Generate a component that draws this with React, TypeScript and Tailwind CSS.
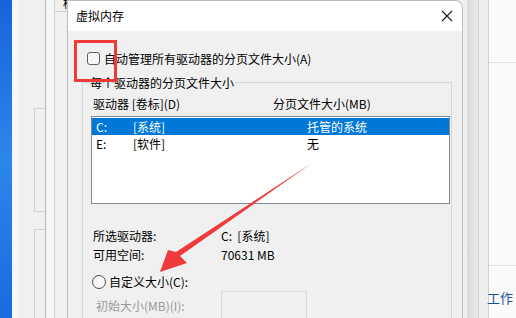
import React from "react";

const font = { fontFamily: '"Noto Sans CJK SC", "Noto Sans", sans-serif' };

function BackWindow() {
  return (
    <div className="flex h-full w-[55px] shrink-0">
      <div className="h-full w-[6px] bg-[#f7f7f7]" />
      <div className="flex h-full w-[16px] flex-col bg-[#f0f0f0]" />
      <div className="flex h-full w-[11px] flex-col bg-[#f0f0f0]">
        <div className="mt-[108px] h-[104px] border-l border-t border-b border-[#d0d0d0]" />
        <div className="mt-[17px] flex-1 border-l border-t border-[#d0d0d0]" />
      </div>
      <div className="h-full w-px bg-[#b9b9b9]" />
      <div className="h-full w-[8px] bg-[#f5f5f5]" />
      <div className="flex h-full w-[13px] flex-col bg-[#f0f0f0]">
        <div className="h-[12px] overflow-hidden border-b border-l border-[#d0d0d0] pl-[8px] text-[11px] leading-[6px] text-black">标</div>
        <div className="flex-1 border-l border-[#d0d0d0]" />
      </div>
    </div>
  );
}

function Dialog() {
  return (
    <div className="flex h-full w-[396px] shrink-0 flex-col overflow-hidden rounded-tr-[8px] border-x border-t border-[#bdbdbd] bg-[#f0f0f0] text-[12px] text-black">
      <div className="flex h-[30px] shrink-0 items-center justify-between bg-white pl-[8px] pr-[8px]">
        <span>虚拟内存</span>
        <svg width="12" height="12" viewBox="0 0 12 12" className="mr-[1px]">
          <path d="M1 1 L11 11 M11 1 L1 11" stroke="#1a1a1a" strokeWidth="1.1" fill="none" />
        </svg>
      </div>

      <div className="mt-[19px] flex h-[17px] items-center pl-[19px]">
        <div className="h-[13px] w-[13px] rounded-[3px] border border-[#5f5f5f] bg-[#f7f7f7]" />
        <span className="ml-[4px] leading-[17px]">自动管理所有驱动器的分页文件大小(A)</span>
      </div>

      <div className="relative ml-[14px] mt-[15px] w-[370px] flex-1 border-l border-t border-r border-[#d6d6d6] pl-[8px]">
        <span className="absolute -top-[9px] left-[6px] bg-[#f0f0f0] px-[1px] leading-[17px]">每个驱动器的分页文件大小</span>
        <div className="mt-[12px] flex h-[17px] items-center pl-[2px] leading-[17px]">
          <span className="w-[180px]">驱动器 [卷标](D)</span>
          <span>分页文件大小(MB)</span>
        </div>
        <div className="mt-[4px] h-[88px] w-[359px] border border-[#828790] bg-white pt-px">
          <div className="flex h-[17px] items-center bg-[#0078d7] pl-[4px] leading-[17px] text-white">
            <span className="w-[37px]">C:</span>
            <span className="w-[174px]">[系统]</span>
            <span>托管的系统</span>
          </div>
          <div className="flex h-[17px] items-center pl-[4px] leading-[17px]">
            <span className="w-[37px]">E:</span>
            <span className="w-[174px]">[软件]</span>
            <span>无</span>
          </div>
        </div>

        <div className="mt-[23px] flex h-[17px] items-center pl-[2px] leading-[17px]">
          <span className="w-[128px]">所选驱动器:</span>
          <span>C:&nbsp;&nbsp;[系统]</span>
        </div>
        <div className="mt-[2px] flex h-[17px] items-center pl-[2px] leading-[17px]">
          <span className="w-[128px]">可用空间:</span>
          <span>70631 MB</span>
        </div>
        <div className="mt-[10px] flex h-[17px] items-center pl-[1px] leading-[17px]">
          <div className="h-[14px] w-[14px] rounded-full border border-[#4d4d4d] bg-[#f7f7f7]" />
          <span className="ml-[3px]">自定义大小(C):</span>
        </div>
        <div className="mt-px flex items-start pl-[5px]">
          <span className="mt-[6px] w-[125px] leading-[17px] text-[#9a9a9a]">初始大小(MB)(I):</span>
          <div className="h-[30px] w-[86px] border border-[#dadada] bg-[#f0f0f0]" />
        </div>
      </div>
    </div>
  );
}

function RightWindow() {
  return (
    <div className="flex h-full flex-1">
      <div className="h-full w-[4px] bg-[#f1f1f1]" />
      <div className="h-full w-[11px] bg-gradient-to-r from-[#dadada] to-[#e9e9e9]" />
      <div className="h-full w-px bg-[#cfcfcf]" />
      <div className="h-full w-[9px] bg-[#eeeeee]" />
      <div className="h-full w-px bg-[#d2d2d2]" />
      <div className="flex h-full flex-1 flex-col bg-[#fafafa]">
        <div className="mt-[62px] h-px bg-[#e3e3e3]" />
        <div className="mt-[202px] h-px bg-[#e3e3e3]" />
        <span className="-ml-[2px] mt-[23px] whitespace-nowrap text-[13px] leading-[17px] text-[#1c4d9b]">工作</span>
      </div>
    </div>
  );
}

export default function App() {
  return (
    <div className="relative flex h-[318px] w-[516px] overflow-hidden bg-[#f0f0f0]" style={font}>
      <div className="h-full w-[12px] shrink-0 bg-gradient-to-b from-[#1763db] via-[#2d86ea] to-[#1a6ae0]" />
      <BackWindow />
      <Dialog />
      <RightWindow />

      {/* annotation overlays */}
      <div className="absolute left-[74px] top-[40px] h-[42px] w-[43px] border-[3px] border-[#ef3a3a]" />
      <svg className="absolute left-0 top-0" width="516" height="318" viewBox="0 0 516 318">
        <polygon points="312,163 180,256 187,263 160,272 168,250 176,252" fill="#ee3a3a" />
      </svg>
    </div>
  );
}
